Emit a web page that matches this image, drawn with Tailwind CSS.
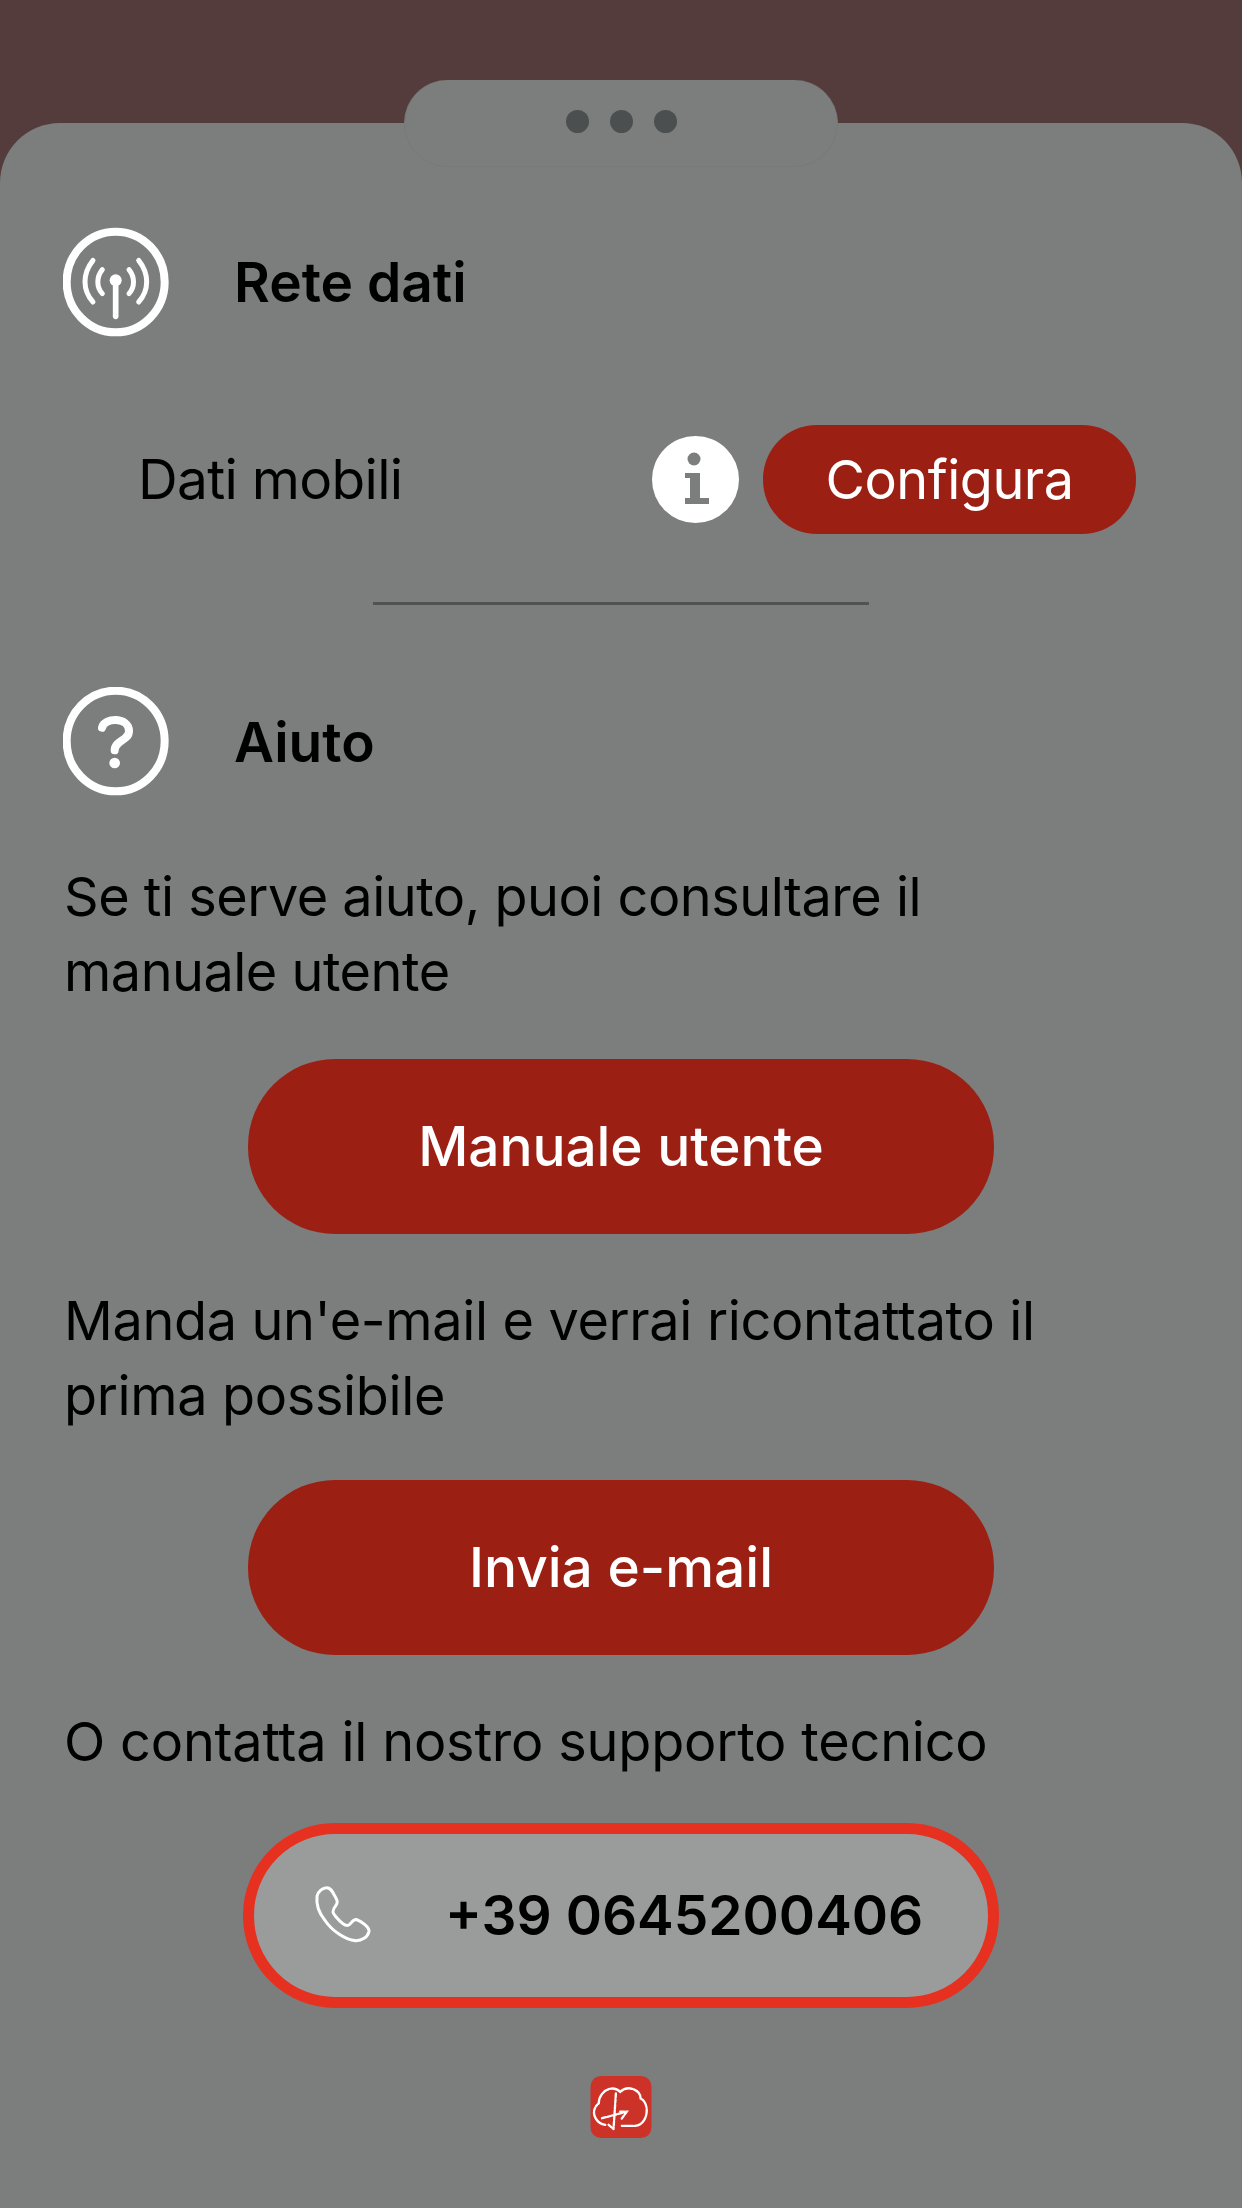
<!DOCTYPE html>
<html lang="it">
<head>
    <meta charset="UTF-8">
    <meta name="viewport" content="width=device-width, initial-scale=1.0">
    <title>Aiuto</title>
    <script src="https://cdn.jsdelivr.net/npm/@tailwindcss/browser@4"></script>
</head>
<body class="bg-[#553c3c] font-['Inter',sans-serif] text-black">
    <div class="h-[2208px] w-[1242px] overflow-hidden pt-[123px]">
        <div class="relative h-[2085px] rounded-t-[60px] bg-[#7c7e7d]">

            <!-- linguetta del foglio -->
            <div class="absolute left-[404px] top-[-43px] flex h-[87px] w-[434px] items-start justify-center gap-[21px] rounded-[44px] border border-t-0 border-[#787a79] bg-[#7c7e7d] pt-[30px]">
                <span class="size-[23px] rounded-full bg-[#4b4f4f]"></span>
                <span class="size-[23px] rounded-full bg-[#4b4f4f]"></span>
                <span class="size-[23px] rounded-full bg-[#4b4f4f]"></span>
            </div>

            <div class="flex flex-col pt-[104px]">
                <!-- Rete dati -->
                <div class="flex h-[110px] items-center pl-[63px]">
                    <svg class="h-[110px] w-[106px]" viewBox="70 50 318 330" fill="none" stroke="#fff" stroke-linecap="round">
                        <ellipse cx="228" cy="215" rx="147" ry="151" stroke-width="24"/>
                        <path d="M160 150C128 190 128 240 160 275M188 178C170 200 170 230 188 250M297 150C329 190 329 240 297 275M268 178C286 200 286 230 268 250" stroke-width="15"/>
                        <path d="M228 215V318" stroke-width="17"/>
                        <circle cx="228" cy="210" r="18" fill="#fff" stroke="none"/>
                    </svg>
                    <h2 class="ml-[65px] text-[55px] font-semibold">Rete dati</h2>
                </div>

                <div class="mt-[88px] flex h-[109px] items-center pl-[138px] pr-[106px]">
                    <span class="text-[55px] tracking-[-0.7px]">Dati mobili</span>
                    <svg class="ml-auto size-[87px]" viewBox="0 0 87 87">
                        <circle cx="43.5" cy="43.5" r="43.5" fill="#fff"/>
                        <circle cx="42" cy="23" r="6.5" fill="#7c7e7d"/>
                        <path d="M33 37H48V62H57V68H33V62H38V42H33Z" fill="#7c7e7d"/>
                    </svg>
                    <button class="ml-[24px] h-[109px] w-[373px] rounded-[54px] bg-[#9c1f13] text-[54px] tracking-[-0.5px] text-white">Configura</button>
                </div>

                <div class="ml-[373px] mt-[68px] h-[3px] w-[496px] bg-[#505353]"></div>

                <!-- Aiuto -->
                <div class="mt-[82px] flex h-[110px] items-center pl-[63px]">
                    <svg class="h-[110px] w-[106px]" viewBox="70 50 318 330" fill="none" stroke="#fff" stroke-linecap="round">
                        <ellipse cx="228" cy="212" rx="147" ry="151" stroke-width="24"/>
                        <path d="M187 172C195 140 268 140 268 182C268 212 226 208 225 240" stroke-width="24"/>
                        <circle cx="225" cy="278" r="16" fill="#fff" stroke="none"/>
                    </svg>
                    <h2 class="ml-[65px] text-[55px] font-semibold">Aiuto</h2>
                </div>

                <div class="mt-[62px] px-[64px] text-[54px] leading-[75px] tracking-[-0.5px]">
                    <p>Se ti serve aiuto, puoi consultare il<br>manuale utente</p>
                </div>
                <button class="ml-[248px] mt-[50px] h-[175px] w-[746px] rounded-[87px] bg-[#9c1f13] text-[55px] font-medium tracking-[-0.1px] text-white">Manuale utente</button>

                <div class="mt-[49px] px-[64px] text-[54px] leading-[75px] tracking-[-0.35px]">
                    <p>Manda un'e-mail e verrai ricontattato il<br>prima possibile</p>
                </div>
                <button class="ml-[248px] mt-[47px] h-[175px] w-[746px] rounded-[87px] bg-[#9c1f13] text-[55px] font-medium text-white">Invia e-mail</button>

                <div class="mt-[49px] px-[64px] text-[54px] leading-[75px] tracking-[-0.2px]">
                    <p>O contatta il nostro supporto tecnico</p>
                </div>
                <button class="ml-[243px] mt-[44px] flex h-[185px] w-[756px] items-center rounded-[92px] border-[11px] border-[#e63020] bg-[#9a9c9b] pl-[56px]">
                    <svg class="h-[67px] w-[67px]" viewBox="240 220 200 200" fill="none" stroke="#fff" stroke-width="9" stroke-linejoin="round">
                        <path d="M290 237C300 237 305 245 312 258C322 275 325 282 316 292C306 304 306 312 316 322C326 334 340 350 352 350C362 350 364 332 378 332C392 336 418 355 416 368C412 385 395 396 375 395C345 393 305 365 285 335C265 310 258 285 261 262C264 248 278 237 290 237Z"/>
                    </svg>
                    <span class="ml-[68px] text-[55px] font-semibold">+39 0645200406</span>
                </button>

                <!-- logo -->
                <svg class="ml-[590px] mt-[68px] size-[62px]" viewBox="60 47 185 188">
                    <rect x="60" y="47" width="185" height="188" rx="32" fill="#cc3227"/>
                    <g fill="none" stroke="#fff" stroke-width="7" stroke-linecap="round">
                        <path d="M105 195C72 190 58 150 85 130C85 95 125 70 150 95C175 72 212 90 212 115C242 130 235 195 195 198H155" stroke-dasharray="70 5"/>
                        <path d="M137 100L130 205M95 175L170 155M150 155L170 155L152 180M115 195L130 208" stroke-dasharray="12 5"/>
                    </g>
                </svg>
            </div>
        </div>
    </div>
</body>
</html>
